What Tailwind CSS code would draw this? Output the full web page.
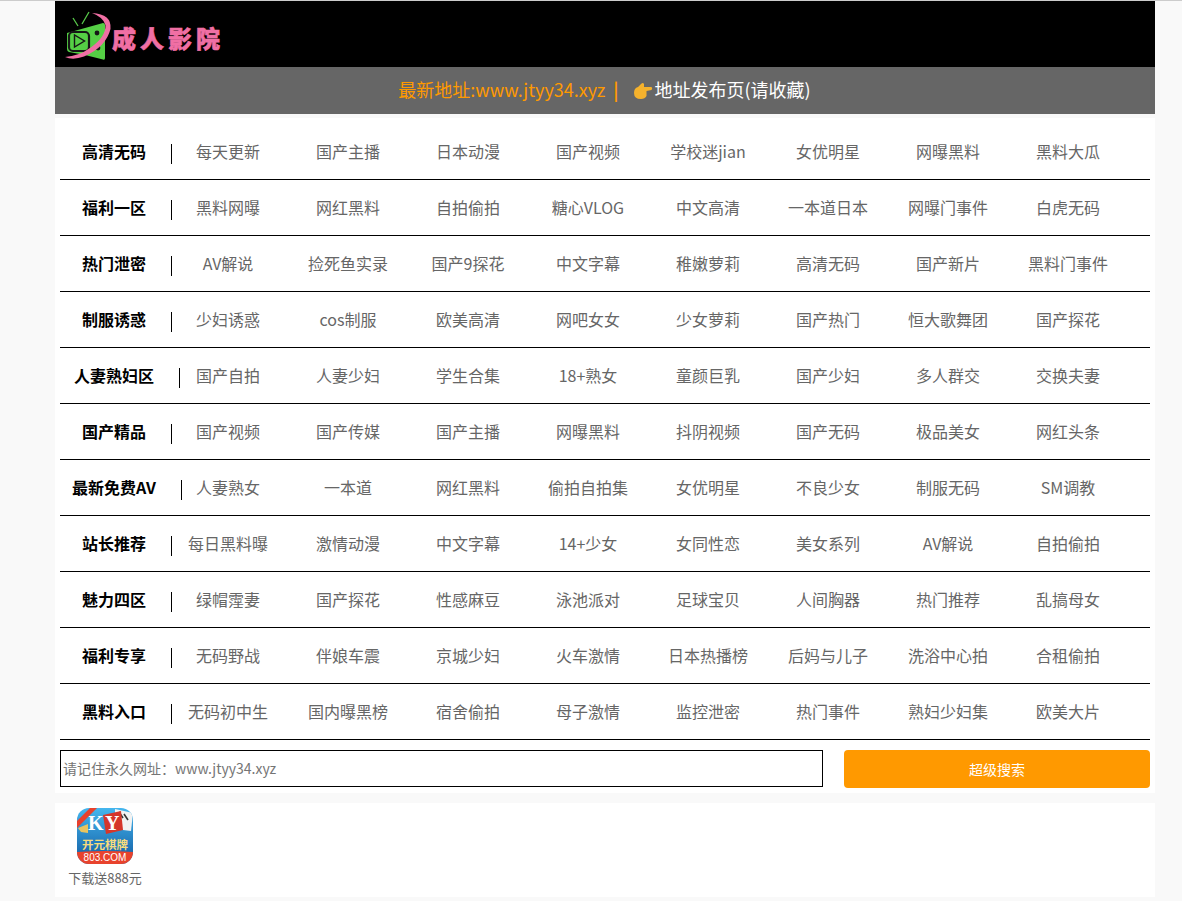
<!DOCTYPE html>
<html lang="zh-CN">
<head>
<meta charset="utf-8">
<title>成人影院</title>
<script src="https://cdn.jsdelivr.net/npm/@tailwindcss/browser@4"></script>
</head>
<body class="bg-[#f9f9f9] font-['Noto_Sans_CJK_SC','Noto_Sans',sans-serif] overflow-hidden">
<div class="h-[901px] border-t border-t-[#cccccc]">
<div class="ml-[55px] w-[1100px]">
  <header class="h-[66px] bg-black flex items-start pl-[10px] pt-[10px]">
    <svg class="w-[47px] h-[50px] shrink-0" viewBox="0 0 47 50" fill="none">
      <path d="M8 7 L13 15 M24 1 L17 13" stroke="#58c94a" stroke-width="1.3"/>
      <path d="M2 22 L38 12 Q40 12 40 14 L40 47 Q40 49.5 38 48.5 L20 44 L4 41 Q2 40.5 2 38 Z" fill="#55cf45"/>
      <rect x="4" y="21" width="20" height="19" rx="4" fill="#55cf45" stroke="#161616" stroke-width="2.2"/>
      <path d="M9.5 24 L9.5 36 L19.5 30 Z" fill="#55cf45" stroke="#161616" stroke-width="1.4"/>
      <circle cx="32" cy="22" r="2.4" fill="#161616"/><circle cx="33" cy="37" r="2.4" fill="#161616"/>
      <path d="M27 2 Q47 3 45.5 18 Q41 36 19 45.5 Q8 49.5 0 46 Q14 45 25 37 Q41 26 40.5 14 Q38 6 27 2 Z" fill="#f06fa4"/>
    </svg>
    <span class="mt-[12px] text-[24px] leading-[30px] font-black tracking-[4px] text-[#f06fa4] [-webkit-text-stroke:0.6px_#f06fa4] whitespace-nowrap">成人影院</span>
  </header>
  <div class="h-[47px] bg-[#666666] flex items-center justify-center text-[18px] pb-[2px] pr-[1px]">
    <span class="text-[#ff9900]">最新地址:www.jtyy34.xyz</span>
    <span class="text-[#ff9900] ml-[8px] font-bold">|</span>
    <svg class="w-[20px] h-[18px] ml-[14px] mr-[2px] mt-[3px]" viewBox="0 0 20 18">
      <path d="M1 11 Q1 6 5 5 L8 2 Q10 0 11 2 L11 5 L18.5 5 Q20 6.5 18.5 8 L13.5 9 L13.5 14 Q12 17 8 17 Q1 17 1 11 Z" fill="#f5b22d"/>
    </svg>
    <span class="text-white">地址发布页(请收藏)</span>
  </div>
  <main class="mt-[4px] bg-white h-[675px] pt-[6px] px-[5px]">
    <div class="flex h-[56px] border-b border-black items-center pb-[2px] text-[16px] text-[#666666] text-center">
      <div class="w-[108px] shrink-0 flex justify-center"><b class="relative whitespace-nowrap text-black">高清无码<i class="absolute left-[calc(100%+25px)] top-[5px] h-[20px] w-px bg-black"></i></b></div>
      <a class="w-[120px]">每天更新</a><a class="w-[120px]">国产主播</a><a class="w-[120px]">日本动漫</a><a class="w-[120px]">国产视频</a><a class="w-[120px]">学校迷jian</a><a class="w-[120px]">女优明星</a><a class="w-[120px]">网曝黑料</a><a class="w-[120px]">黑料大瓜</a>
    </div>
    <div class="flex h-[56px] border-b border-black items-center pb-[2px] text-[16px] text-[#666666] text-center">
      <div class="w-[108px] shrink-0 flex justify-center"><b class="relative whitespace-nowrap text-black">福利一区<i class="absolute left-[calc(100%+25px)] top-[5px] h-[20px] w-px bg-black"></i></b></div>
      <a class="w-[120px]">黑料网曝</a><a class="w-[120px]">网红黑料</a><a class="w-[120px]">自拍偷拍</a><a class="w-[120px]">糖心VLOG</a><a class="w-[120px]">中文高清</a><a class="w-[120px]">一本道日本</a><a class="w-[120px]">网曝门事件</a><a class="w-[120px]">白虎无码</a>
    </div>
    <div class="flex h-[56px] border-b border-black items-center pb-[2px] text-[16px] text-[#666666] text-center">
      <div class="w-[108px] shrink-0 flex justify-center"><b class="relative whitespace-nowrap text-black">热门泄密<i class="absolute left-[calc(100%+25px)] top-[5px] h-[20px] w-px bg-black"></i></b></div>
      <a class="w-[120px]">AV解说</a><a class="w-[120px]">捡死鱼实录</a><a class="w-[120px]">国产9探花</a><a class="w-[120px]">中文字幕</a><a class="w-[120px]">稚嫩萝莉</a><a class="w-[120px]">高清无码</a><a class="w-[120px]">国产新片</a><a class="w-[120px]">黑料门事件</a>
    </div>
    <div class="flex h-[56px] border-b border-black items-center pb-[2px] text-[16px] text-[#666666] text-center">
      <div class="w-[108px] shrink-0 flex justify-center"><b class="relative whitespace-nowrap text-black">制服诱惑<i class="absolute left-[calc(100%+25px)] top-[5px] h-[20px] w-px bg-black"></i></b></div>
      <a class="w-[120px]">少妇诱惑</a><a class="w-[120px]">cos制服</a><a class="w-[120px]">欧美高清</a><a class="w-[120px]">网吧女女</a><a class="w-[120px]">少女萝莉</a><a class="w-[120px]">国产热门</a><a class="w-[120px]">恒大歌舞团</a><a class="w-[120px]">国产探花</a>
    </div>
    <div class="flex h-[56px] border-b border-black items-center pb-[2px] text-[16px] text-[#666666] text-center">
      <div class="w-[108px] shrink-0 flex justify-center"><b class="relative whitespace-nowrap text-black">人妻熟妇区<i class="absolute left-[calc(100%+25px)] top-[5px] h-[20px] w-px bg-black"></i></b></div>
      <a class="w-[120px]">国产自拍</a><a class="w-[120px]">人妻少妇</a><a class="w-[120px]">学生合集</a><a class="w-[120px]">18+熟女</a><a class="w-[120px]">童颜巨乳</a><a class="w-[120px]">国产少妇</a><a class="w-[120px]">多人群交</a><a class="w-[120px]">交换夫妻</a>
    </div>
    <div class="flex h-[56px] border-b border-black items-center pb-[2px] text-[16px] text-[#666666] text-center">
      <div class="w-[108px] shrink-0 flex justify-center"><b class="relative whitespace-nowrap text-black">国产精品<i class="absolute left-[calc(100%+25px)] top-[5px] h-[20px] w-px bg-black"></i></b></div>
      <a class="w-[120px]">国产视频</a><a class="w-[120px]">国产传媒</a><a class="w-[120px]">国产主播</a><a class="w-[120px]">网曝黑料</a><a class="w-[120px]">抖阴视频</a><a class="w-[120px]">国产无码</a><a class="w-[120px]">极品美女</a><a class="w-[120px]">网红头条</a>
    </div>
    <div class="flex h-[56px] border-b border-black items-center pb-[2px] text-[16px] text-[#666666] text-center">
      <div class="w-[108px] shrink-0 flex justify-center"><b class="relative whitespace-nowrap text-black">最新免费AV<i class="absolute left-[calc(100%+25px)] top-[5px] h-[20px] w-px bg-black"></i></b></div>
      <a class="w-[120px]">人妻熟女</a><a class="w-[120px]">一本道</a><a class="w-[120px]">网红黑料</a><a class="w-[120px]">偷拍自拍集</a><a class="w-[120px]">女优明星</a><a class="w-[120px]">不良少女</a><a class="w-[120px]">制服无码</a><a class="w-[120px]">SM调教</a>
    </div>
    <div class="flex h-[56px] border-b border-black items-center pb-[2px] text-[16px] text-[#666666] text-center">
      <div class="w-[108px] shrink-0 flex justify-center"><b class="relative whitespace-nowrap text-black">站长推荐<i class="absolute left-[calc(100%+25px)] top-[5px] h-[20px] w-px bg-black"></i></b></div>
      <a class="w-[120px]">每日黑料曝</a><a class="w-[120px]">激情动漫</a><a class="w-[120px]">中文字幕</a><a class="w-[120px]">14+少女</a><a class="w-[120px]">女同性恋</a><a class="w-[120px]">美女系列</a><a class="w-[120px]">AV解说</a><a class="w-[120px]">自拍偷拍</a>
    </div>
    <div class="flex h-[56px] border-b border-black items-center pb-[2px] text-[16px] text-[#666666] text-center">
      <div class="w-[108px] shrink-0 flex justify-center"><b class="relative whitespace-nowrap text-black">魅力四区<i class="absolute left-[calc(100%+25px)] top-[5px] h-[20px] w-px bg-black"></i></b></div>
      <a class="w-[120px]">绿帽霪妻</a><a class="w-[120px]">国产探花</a><a class="w-[120px]">性感麻豆</a><a class="w-[120px]">泳池派对</a><a class="w-[120px]">足球宝贝</a><a class="w-[120px]">人间胸器</a><a class="w-[120px]">热门推荐</a><a class="w-[120px]">乱搞母女</a>
    </div>
    <div class="flex h-[56px] border-b border-black items-center pb-[2px] text-[16px] text-[#666666] text-center">
      <div class="w-[108px] shrink-0 flex justify-center"><b class="relative whitespace-nowrap text-black">福利专享<i class="absolute left-[calc(100%+25px)] top-[5px] h-[20px] w-px bg-black"></i></b></div>
      <a class="w-[120px]">无码野战</a><a class="w-[120px]">伴娘车震</a><a class="w-[120px]">京城少妇</a><a class="w-[120px]">火车激情</a><a class="w-[120px]">日本热播榜</a><a class="w-[120px]">后妈与儿子</a><a class="w-[120px]">洗浴中心拍</a><a class="w-[120px]">合租偷拍</a>
    </div>
    <div class="flex h-[56px] border-b border-black items-center pb-[2px] text-[16px] text-[#666666] text-center">
      <div class="w-[108px] shrink-0 flex justify-center"><b class="relative whitespace-nowrap text-black">黑料入口<i class="absolute left-[calc(100%+25px)] top-[5px] h-[20px] w-px bg-black"></i></b></div>
      <a class="w-[120px]">无码初中生</a><a class="w-[120px]">国内曝黑榜</a><a class="w-[120px]">宿舍偷拍</a><a class="w-[120px]">母子激情</a><a class="w-[120px]">监控泄密</a><a class="w-[120px]">热门事件</a><a class="w-[120px]">熟妇少妇集</a><a class="w-[120px]">欧美大片</a>
    </div>
    <div class="flex justify-between items-start mt-[10px]">
      <input class="w-[763px] h-[37px] border border-black bg-white px-[2px] pb-[2px] text-[14px] placeholder:text-[#757575] outline-none" placeholder="请记住永久网址：www.jtyy34.xyz">
      <button class="w-[306px] h-[38px] rounded-[4px] bg-[#ff9900] text-white text-[14px]">超级搜索</button>
    </div>
  </main>
  <section class="mt-[10px] bg-white h-[94px] pt-[5px] pl-[5px]">
    <div class="w-[90px] flex flex-col items-center">
      <svg class="w-[56px] h-[56px] rounded-[12px]" viewBox="0 0 56 56">
        <defs>
          <linearGradient id="sky" x1="0" y1="0" x2="0" y2="1"><stop offset="0" stop-color="#45b6ee"/><stop offset="0.8" stop-color="#1a6cb0"/></linearGradient>
        </defs>
        <rect width="56" height="56" fill="url(#sky)"/>
        <path d="M38 1 L56 5 L54 23 L38 21 Z" fill="#f2f2f2"/>
        <path d="M42 4 L46 10 M47 6 L51 12" stroke="#333" stroke-width="1.6"/>
        <path d="M1 20 L11 16 L11 25 L4 24 Z" fill="#e9c45f"/>
        <path d="M26 7 L44 3 L46 22 L29 26 Z" fill="#d5362a"/>
        <text x="11" y="22" font-size="20" font-weight="700" font-family="Liberation Serif" fill="#ffffff">K</text>
        <text x="28" y="22" font-size="20" font-weight="700" font-family="Liberation Serif" fill="#ffffff">Y</text>
        <path d="M0 13 L13 0 H20 L0 20 Z" fill="#e8412c"/>
        <text x="28" y="40.5" text-anchor="middle" font-size="11.5" font-weight="700" fill="#f7dc7d">开元棋牌</text>
        <path d="M0 44 Q28 42 56 44 V56 H0 Z" fill="#e8432d"/>
        <text x="28" y="52.5" text-anchor="middle" font-size="10" font-family="Liberation Sans" fill="#ffffff">803.COM</text>
      </svg>
      <span class="mt-[4px] text-[13px] leading-[20px] text-[#666666] whitespace-nowrap">下载送888元</span>
    </div>
  </section>
</div>
</div>
</body>
</html>
